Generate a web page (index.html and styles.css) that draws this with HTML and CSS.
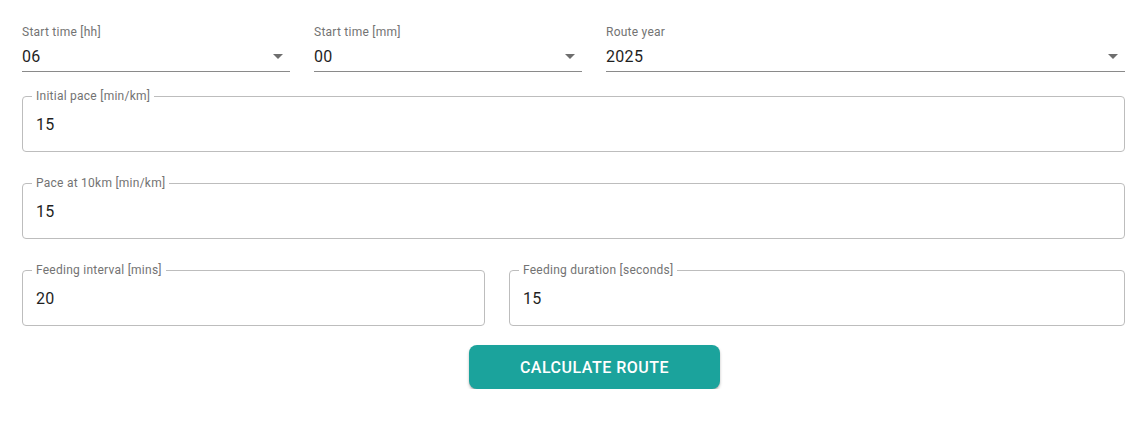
FILE: index.html
```html
<!DOCTYPE html>
<html>
<head>
<meta charset="utf-8">
<link rel="stylesheet" href="styles.css">
</head>
<body>
<form class="form">
  <div class="row-selects">
    <div class="select">
      <div class="select-label">Start time [hh]</div>
      <div class="select-body"><span class="select-value">06</span><span class="caret"></span></div>
    </div>
    <div class="select">
      <div class="select-label">Start time [mm]</div>
      <div class="select-body"><span class="select-value">00</span><span class="caret"></span></div>
    </div>
    <div class="select">
      <div class="select-label">Route year</div>
      <div class="select-body"><span class="select-value">2025</span><span class="caret"></span></div>
    </div>
  </div>
  <div class="outlined">
    <span class="outlined-label">Initial pace [min/km]</span>
    <div class="outlined-value">15</div>
  </div>
  <div class="outlined">
    <span class="outlined-label">Pace at 10km [min/km]</span>
    <div class="outlined-value">15</div>
  </div>
  <div class="row-feeding">
    <div class="outlined">
      <span class="outlined-label">Feeding interval [mins]</span>
      <div class="outlined-value">20</div>
    </div>
    <div class="outlined">
      <span class="outlined-label">Feeding duration [seconds]</span>
      <div class="outlined-value">15</div>
    </div>
  </div>
  <div class="actions">
    <button type="button" class="btn">Calculate route</button>
  </div>
</form>
</body>
</html>
```
FILE: styles.css
```css
* { box-sizing: border-box; }
html, body { margin: 0; background: #fff; }
body { font-family: Roboto, "Noto Sans", sans-serif; color: #1f1f1f; }

.form {
  padding: 24px 16px 0 22px;
  display: flex;
  flex-direction: column;
}

.row-selects {
  display: grid;
  grid-template-columns: 268px 268px 1fr;
  column-gap: 24px;
}

.select-label {
  font-size: 12px;
  line-height: 16px;
  color: #737373;
  letter-spacing: 0.25px;
  height: 16px;
}
.select-body {
  display: flex;
  align-items: center;
  justify-content: space-between;
  height: 32px;
  border-bottom: 1px solid #8a8a8a;
  padding-top: 2px;
}
.select-value {
  font-size: 16px;
  color: #1f1f1f;
  letter-spacing: 0.3px;
}
.caret {
  width: 0; height: 0;
  border-left: 5px solid transparent;
  border-right: 5px solid transparent;
  border-top: 5px solid #6e6e6e;
  margin-right: 7px;
}

.outlined {
  position: relative;
  border: 1px solid #bdbdbd;
  border-radius: 4px;
  padding: 0 13px;
  height: 56px;
  display: flex;
  align-items: center;
  min-width: 0;
}
.form > .outlined { margin-top: 24px; }
.form > .outlined + .outlined { margin-top: 31px; }
.outlined-label {
  position: absolute;
  left: 9px;
  top: -7px;
  font-size: 12px;
  line-height: 12px;
  color: #737373;
  letter-spacing: 0.25px;
  padding: 0 4px;
  background: #fff;
}
.outlined-value {
  font-size: 16px;
  line-height: 20px;
  margin-top: 1px;
  color: #1f1f1f;
  letter-spacing: 0.3px;
}

.row-feeding {
  margin-top: 31px;
  display: grid;
  grid-template-columns: 463px 1fr;
  column-gap: 24px;
}

.actions {
  display: flex;
  justify-content: center;
  margin-top: 19px;
  padding-left: 42px;
}
.btn {
  width: 251px;
  height: 44px;
  border: none;
  border-radius: 8px;
  background: #1ba39c;
  color: #fff;
  font-family: Roboto, sans-serif;
  font-weight: 500;
  font-size: 16px;
  letter-spacing: 0.5px;
  text-transform: uppercase;
  box-shadow: 0 2px 3px rgba(0,0,0,0.25), 0 1px 1px rgba(0,0,0,0.1);
}
```
